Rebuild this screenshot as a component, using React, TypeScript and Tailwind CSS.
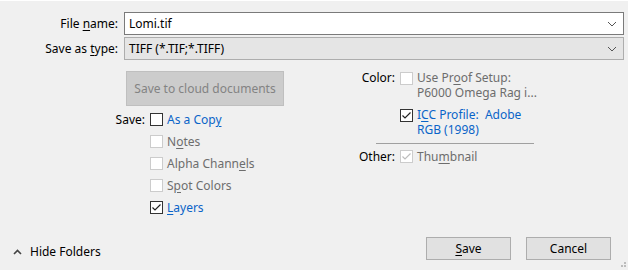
import React from 'react';

const font = { fontFamily: '"Noto Sans", "Liberation Sans", sans-serif' };

const Check: React.FC<{ checked?: boolean; disabled?: boolean }> = ({ checked, disabled }) => (
  <div
    className={`w-[13px] h-[13px] shrink-0 border bg-white flex items-center justify-center ${
      disabled ? 'border-[#cccccc]' : 'border-[#333333]'
    }`}
  >
    {checked && (
      <svg width="11" height="11" viewBox="0 0 11 11">
        <polyline
          points="1.5,5.5 4,8 9.5,2.5"
          fill="none"
          stroke={disabled ? '#bdbdbd' : '#222'}
          strokeWidth="1.2"
        />
      </svg>
    )}
  </div>
);

const Chevron: React.FC = () => (
  <svg width="10" height="6" viewBox="0 0 10 6" className="shrink-0">
    <polyline points="1,1 5,5 9,1" fill="none" stroke="#555" strokeWidth="1" />
  </svg>
);

const U: React.FC<{ children: React.ReactNode }> = ({ children }) => (
  <span className="underline underline-offset-2">{children}</span>
);

type Opt = { label: React.ReactNode; checked?: boolean; enabled?: boolean };

const saveOpts: Opt[] = [
  { label: <>As a Cop<U>y</U></>, enabled: true },
  { label: <>N<U>o</U>tes</> },
  { label: <>Alpha Chann<U>e</U>ls</> },
  { label: <>S<U>p</U>ot Colors</> },
  { label: <><U>L</U>ayers</>, checked: true, enabled: true },
];

export default function App() {
  return (
    <div style={font} className="relative w-[628px] h-[270px] bg-[#f0f0f0] border-t border-white text-[12px] text-black overflow-hidden">
      {/* file name / type */}
      <div className="pt-[11px] flex flex-col gap-[2px]">
        <div className="flex items-center">
          <div className="w-[119px] text-right pr-[1px]">File <U>n</U>ame:</div>
          <div className="ml-[5px] w-[500px] h-[23px] bg-white border border-[#7a7a7a] flex items-center pl-[4px] pr-[6px]">
            <span className="flex-1">Lomi.tif</span>
            <Chevron />
          </div>
        </div>
        <div className="flex items-center">
          <div className="w-[119px] text-right pr-[1px]">Save as <U>t</U>ype:</div>
          <div className="ml-[5px] w-[500px] h-[23px] bg-[#e5e5e5] border border-[#adadad] flex items-center pl-[4px] pr-[6px]">
            <span className="flex-1">TIFF (*.TIF;*.TIFF)</span>
            <Chevron />
          </div>
        </div>
      </div>

      {/* options */}
      <div className="flex mt-[10px] leading-[15px]">
        <div className="w-[355px] pt-[1px]">
          <div className="ml-[126px] w-[158px] h-[35px] bg-[#cccccc] border border-[#bfbfbf] text-[#838383] flex items-center justify-center">
            Save to cloud documents
          </div>
          <div className="mt-[2px] flex flex-col">
            {saveOpts.map((o, i) => (
              <div key={i} className="h-[22px] flex items-center">
                <div className="w-[145px] text-right">{i === 0 ? 'Save:' : ''}</div>
                <div className="ml-[5px]">
                  <Check checked={o.checked} disabled={!o.enabled} />
                </div>
                <span className={`ml-[4px] ${o.enabled ? 'text-[#0a64c8]' : 'text-[#6d6d6d]'}`}>{o.label}</span>
              </div>
            ))}
          </div>
        </div>

        <div className="flex flex-col">
          <div className="flex items-start">
            <div className="w-[40px] text-right">Color:</div>
            <div className="ml-[5px] mt-[2px]">
              <Check disabled />
            </div>
            <div className="ml-[4px] text-[#6d6d6d]">
              Use Pr<U>o</U>of Setup:
              <br />
              P6000 Omega Rag i...
            </div>
          </div>
          <div className="flex items-start mt-[7px]">
            <div className="w-[40px]" />
            <div className="ml-[5px] mt-[2px]">
              <Check checked />
            </div>
            <div className="ml-[4px] text-[#0a64c8]">
              I<U>C</U>C Profile:&nbsp; Adobe
              <br />
              RGB (1998)
            </div>
          </div>
          <div className="mt-[6px] ml-[21px] w-[158px] h-px bg-[#a0a0a0]" />
          <div className="flex items-start mt-[5px]">
            <div className="w-[40px] text-right">Other:</div>
            <div className="ml-[5px] mt-[1px]">
              <Check checked disabled />
            </div>
            <div className="ml-[4px] text-[#6d6d6d]">
              Thu<U>m</U>bnail
            </div>
          </div>
        </div>
      </div>

      {/* footer */}
      <div className="flex items-start mt-[19px]">
        <div className="flex items-center gap-[8px] pl-[13px] pt-[6px]">
          <svg width="9" height="6" viewBox="0 0 9 6">
            <polyline points="1,5 4.5,1.5 8,5" fill="none" stroke="#444" strokeWidth="1.6" />
          </svg>
          <span>Hide Folders</span>
        </div>
        <div className="ml-auto mr-[17px] flex gap-[15px]">
          <button className="w-[85px] h-[23px] bg-[#e1e1e1] border border-[#adadad]">
            <U>S</U>ave
          </button>
          <button className="w-[85px] h-[23px] bg-[#e1e1e1] border border-[#adadad]">Cancel</button>
        </div>
      </div>

      {/* resize grip */}
      <div className="absolute right-[2px] bottom-[3px] grid grid-cols-2 gap-[1px]">
        <div className="w-[2px] h-[2px]" />
        <div className="w-[2px] h-[2px] bg-[#bcbcbc]" />
        <div className="w-[2px] h-[2px] bg-[#bcbcbc]" />
        <div className="w-[2px] h-[2px] bg-[#bcbcbc]" />
      </div>
    </div>
  );
}
